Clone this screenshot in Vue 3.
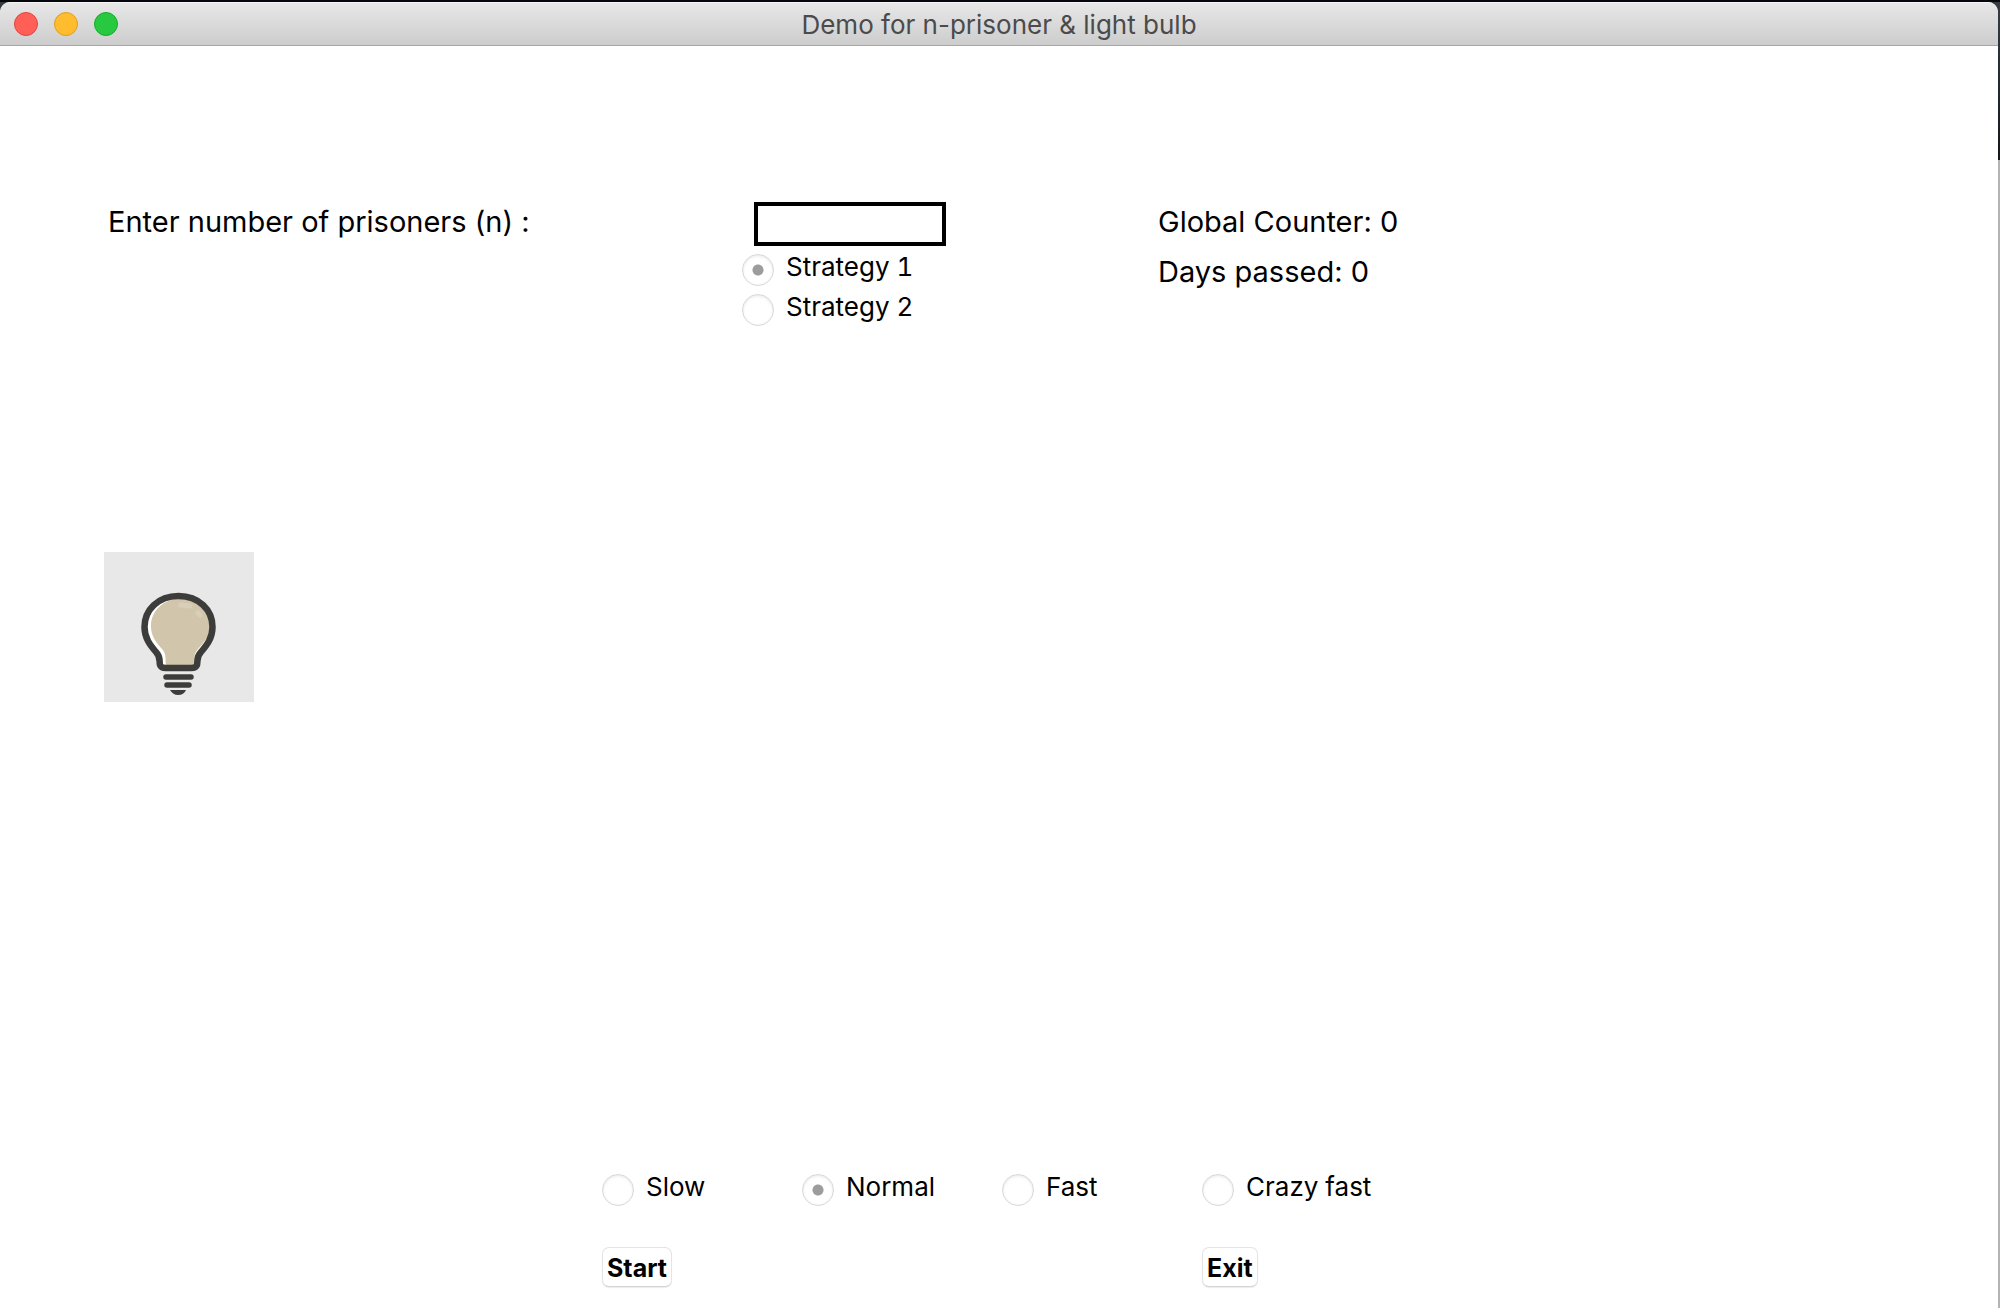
<script setup>
import { ref } from 'vue'

const prisoners = ref('')
const strategy = ref(1)
const speed = ref('normal')
const globalCounter = ref(0)
const daysPassed = ref(0)

const strategies = [
  { value: 1, label: 'Strategy 1' },
  { value: 2, label: 'Strategy 2' },
]
const speeds = [
  { value: 'slow', label: 'Slow' },
  { value: 'normal', label: 'Normal' },
  { value: 'fast', label: 'Fast' },
  { value: 'crazy', label: 'Crazy fast' },
]
</script>

<template>
  <div class="desktop">
    <div class="window">
      <header class="titlebar">
        <div class="lights">
          <button class="light close" type="button" aria-label="Close"></button>
          <button class="light minimise" type="button" aria-label="Minimise"></button>
          <button class="light zoom" type="button" aria-label="Zoom"></button>
        </div>
        <h1 class="title">Demo for n-prisoner &amp; light bulb</h1>
      </header>

      <main class="content">
        <section class="setup">
          <label class="prompt" for="prisoners">Enter number of prisoners (n) :</label>
          <div class="entry">
            <input id="prisoners" v-model="prisoners" class="field" type="text" />
            <div class="strategies">
              <label v-for="s in strategies" :key="s.value" class="option">
                <input v-model="strategy" type="radio" name="strategy" :value="s.value" />
                <span>{{ s.label }}</span>
              </label>
            </div>
          </div>
          <div class="stats">
            <p>Global Counter: {{ globalCounter }}</p>
            <p>Days passed: {{ daysPassed }}</p>
          </div>
        </section>

        <section class="stage">
          <svg class="bulb" viewBox="0 0 150 150" role="img" aria-label="Light bulb, off">
            <rect width="150" height="150" fill="#e8e8e8" />
            <path d="M74 44C54 44 41 58 41 75C41 86 46 93 52 100C57 105 55 109 56 113Q57 117 62 117H87Q92 117 93 113C94 109 92 105 97 100C103 93 109 86 109 75C109 58 96 44 74 44Z" fill="#fff" />
            <path d="M76 47C58 47 47 60 47 74C47 85 53 91 58 97C63 102 61 108 62 113H90C91 108 89 102 94 97C99 91 106 85 106 74C106 60 95 47 76 47Z" fill="#d1c5ab" />
            <path d="M77 53L86 54M94 61L96 63" fill="none" stroke="#d9cfb8" stroke-width="5" stroke-linecap="round" />
            <path d="M74.500 44C54 44 40.500 58 40.500 75C40.500 86 46 93 52 100C57 105 55 109 56 113Q57 116 62 116H87Q92 116 93 113C94 109 92 105 97 100C103 93 108.500 86 108.500 75C108.500 58 95 44 74.500 44Z" fill="none" stroke="#3c3d3b" stroke-width="6.500" />
            <path d="M62 125H87M63 133H85" stroke="#3c3d3b" stroke-width="5.500" stroke-linecap="round" />
            <path d="M66 138H82Q80 143 74 143Q69 143 66 138Z" fill="#3c3d3b" />
          </svg>
        </section>

        <section class="controls">
          <label v-for="s in speeds" :key="s.value" class="option">
            <input v-model="speed" type="radio" name="speed" :value="s.value" />
            <span>{{ s.label }}</span>
          </label>
          <button class="push start" type="button">Start</button>
          <button class="push exit" type="button">Exit</button>
        </section>
      </main>
    </div>
  </div>
</template>

<style>
body {
  margin: 0;
}
</style>

<style scoped>
.desktop {
  box-sizing: border-box;
  display: flex;
  min-height: 100vh;
  padding: 2px 2px 0 0;
  background: linear-gradient(#05070c 0 2px, #363c42 2px, #14181b 160px, #b4b4b4 160px);
  font-family: Inter, "Liberation Sans", sans-serif;
  color: #000;
}

.window {
  flex: 1;
  display: flex;
  flex-direction: column;
  background: #fff;
  border-radius: 10px 10px 0 0;
  overflow: hidden;
}

.titlebar {
  box-sizing: border-box;
  display: grid;
  grid-template-columns: 1fr auto 1fr;
  align-items: center;
  height: 44px;
  padding: 0 14px;
  background: linear-gradient(#e7e7e7, #cdcdcd);
  border-top: 1px solid #f4f4f4;
  border-bottom: 1px solid #a6a6a6;
}

.lights {
  display: flex;
  gap: 16px;
}

.light {
  width: 24px;
  height: 24px;
  padding: 0;
  border: 1px solid;
  border-radius: 50%;
}

.close {
  background: #ff5f57;
  border-color: #e2463f;
}

.minimise {
  background: #febc2e;
  border-color: #e09e1f;
}

.zoom {
  background: #28c840;
  border-color: #14ae28;
}

.title {
  margin: 0;
  padding-top: 2px;
  font-size: 26px;
  font-weight: 400;
  line-height: 32px;
  color: #4b4b4b;
}

.content {
  flex: 1;
  display: flex;
  flex-direction: column;
  padding: 156px 104px 21px;
}

.setup {
  display: grid;
  grid-template-columns: 638px 412px 1fr;
  align-items: start;
}

.prompt,
.stats p {
  margin: 0;
  padding-left: 4px;
  font-size: 29px;
  line-height: 40px;
}

.stats {
  display: grid;
  gap: 10px;
}

.field {
  display: block;
  box-sizing: border-box;
  width: 192px;
  height: 44px;
  margin-left: 12px;
  padding: 0 6px;
  border: 4px solid #000;
  border-radius: 0;
  background: #fff;
  font: inherit;
  font-size: 26px;
  outline: none;
}

.strategies {
  display: grid;
  gap: 8px;
  margin-top: 8px;
}

.option {
  display: flex;
  align-items: flex-start;
  gap: 12px;
  font-size: 26px;
  font-variant-numeric: tabular-nums;
  line-height: 26px;
}

.option input {
  appearance: none;
  flex: none;
  box-sizing: border-box;
  width: 32px;
  height: 32px;
  margin: 0;
  border: 1px solid #d8d8d8;
  border-radius: 50%;
  background: #fff;
  box-shadow: inset 0 1px 3px #e6e6e6;
}

.option input:checked {
  background: radial-gradient(circle, #9c9c9c 5px, #fff 6px);
}

.stage {
  flex: 1;
  padding-top: 226px;
}

.bulb {
  display: block;
  width: 150px;
  height: 150px;
}

.controls {
  display: grid;
  grid-template-columns: repeat(4, 200px);
  row-gap: 41px;
  padding-left: 498px;
}

.push {
  justify-self: start;
  height: 40px;
  padding: 2px 4px 0;
  border: 1px solid #e4e4e4;
  border-bottom-color: #d4d4d4;
  border-radius: 7px;
  background: #fff;
  box-shadow: 0 1px 1px #ececec;
  font-family: inherit;
  font-size: 25px;
  font-weight: 700;
  line-height: 30px;
  color: #000;
}

.start {
  grid-column: 1;
}

.exit {
  grid-column: 4;
}
</style>
